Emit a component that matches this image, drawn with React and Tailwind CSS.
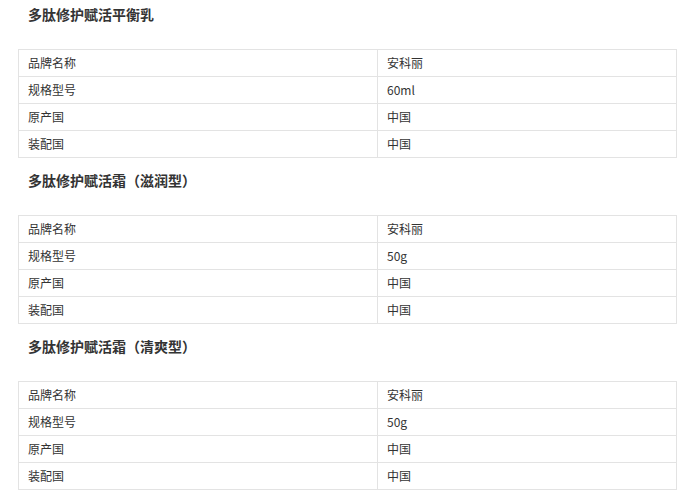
import React from 'react';

const products = [
  { name: '多肽修护赋活平衡乳', spec: '60ml' },
  { name: '多肽修护赋活霜（滋润型）', spec: '50g' },
  { name: '多肽修护赋活霜（清爽型）', spec: '50g' },
];

const SpecTable = ({ spec }) => {
  const rows = [
    ['品牌名称', '安科丽'],
    ['规格型号', spec],
    ['原产国', '中国'],
    ['装配国', '中国'],
  ];
  return (
    <table className="ml-[18px] w-[659px] table-fixed border-collapse text-[12px] text-[#333]">
      <colgroup>
        <col className="w-[359px]" />
        <col />
      </colgroup>
      <tbody>
        {rows.map(([label, value]) => (
          <tr key={label} className="h-[27px]">
            <td className="border border-[#e3e3e3] px-[9px] py-0 leading-[26px]">{label}</td>
            <td className="border border-[#e3e3e3] px-[9px] py-0 leading-[26px]">{value}</td>
          </tr>
        ))}
      </tbody>
    </table>
  );
};

export default function App() {
  return (
    <div
      className="w-[693px] h-[499px] bg-white pt-[4px] flex flex-col gap-[12px] overflow-hidden"
      style={{ fontFamily: '"Noto Sans CJK SC", "Liberation Sans", sans-serif' }}
    >
      {products.map((p) => (
        <section key={p.name}>
          <h3 className="pl-[28px] text-[14px] leading-[20px] font-bold text-[#333] mb-[25px]">{p.name}</h3>
          <SpecTable spec={p.spec} />
        </section>
      ))}
    </div>
  );
}
